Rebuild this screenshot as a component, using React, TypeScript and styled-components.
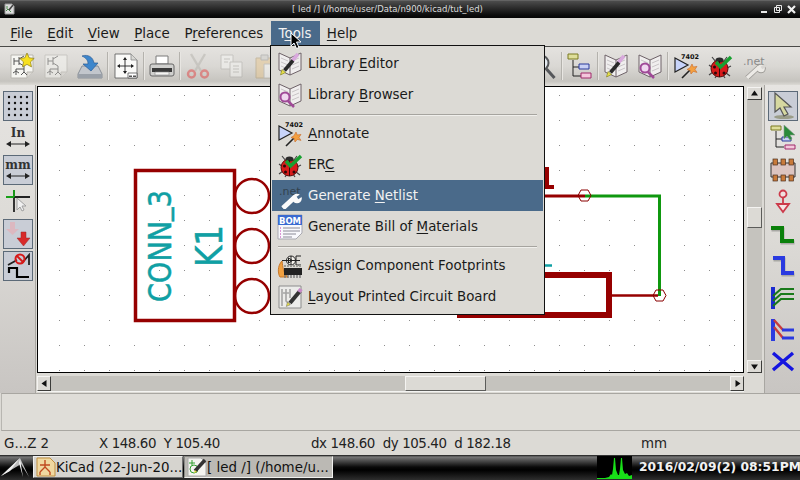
import React from 'react';
import styled, { createGlobalStyle } from 'styled-components';

const GlobalStyle = createGlobalStyle`
  html, body {
    margin: 0;
    padding: 0;
    background: #dcdad5;
  }
  body {
    font-family: 'DejaVu Sans', sans-serif;
    font-size: 13.4px;
    color: #1a1a1a;
  }
  svg {
    flex: none;
  }
`;

const Screen = styled.div`
  position: relative;
  width: 800px;
  height: 480px;
  overflow: hidden;
  display: flex;
  flex-direction: column;
  background: #dcdad5;
`;

/* window title */
const TitleBar = styled.div`
  height: 18px;
  flex: none;
  display: flex;
  align-items: center;
  padding: 0 4px;
  box-sizing: border-box;
  background: linear-gradient(#7a7a7a 0, #4c4c4c 1px, #2c2c2c 8px, #0c0c0c 15px, #050505 100%);
  color: #dcdcdc;
  font-size: 8.5px;
`;

const TitleText = styled.div`
  flex: 1;
  text-align: center;
  white-space: pre;
`;

const WindowButtons = styled.div`
  display: flex;
  width: 36px;
  justify-content: space-between;
`;

/* menu bar */
const MenuBar = styled.div`
  height: 29px;
  flex: none;
  display: flex;
  align-items: stretch;
  box-sizing: border-box;
  padding: 3px 3px 1px 3px;
  border-bottom: 1px solid #4a4a48;
  background: #dcdad5;
`;

const MenuTitle = styled.div<{ $open?: boolean }>`
  display: flex;
  align-items: center;
  padding: 0 ${({ $open }) => ($open ? '8px' : '7.3px')};
  background: ${({ $open }) => ($open ? '#4a6a8a' : 'transparent')};
  color: ${({ $open }) => ($open ? '#f2f2f2' : '#1a1a1a')};
  white-space: pre;
`;

const Key = styled.span`
  text-decoration: underline;
  text-underline-offset: 2px;
  text-decoration-thickness: 1px;
`;

/* top icon toolbar */
const TopToolbar = styled.div`
  height: 38px;
  flex: none;
  display: flex;
  align-items: center;
  box-sizing: border-box;
  padding-left: 5px;
  background: linear-gradient(#e4e2df 0, #dad8d4 50%, #c6c4bf 90%, #dcdad5 100%);
`;

const ToolSlot = styled.div`
  width: 34px;
  height: 30px;
  flex: none;
  display: flex;
  align-items: center;
  justify-content: center;
`;

const ToolSep = styled.div`
  width: 2px;
  height: 28px;
  flex: none;
  background: linear-gradient(90deg, #b4b2ad 50%, #e8e6e2 50%);
`;

const HiddenGap = styled.div`
  width: 244px;
  flex: none;
`;

/* main area */
const Workspace = styled.div`
  height: 308px;
  flex: none;
  display: flex;
  background: #dcdad5;
`;

const SideTools = styled.div<{ $side: 'left' | 'right' }>`
  width: 36px;
  flex: none;
  display: flex;
  flex-direction: column;
  gap: 2px;
  box-sizing: border-box;
  padding: 6px 3px 0 3px;
  background: linear-gradient(#e6e4e1 0, #dcdad6 50%, #c8c5c2 100%);
  border-${({ $side }) => ($side === 'left' ? 'right' : 'left')}: 1px solid #a8a6a1;
`;

const SideButton = styled.div<{ $on?: boolean }>`
  width: 30px;
  height: 30px;
  box-sizing: border-box;
  display: flex;
  align-items: center;
  justify-content: center;
  border: 1px solid ${({ $on }) => ($on ? '#5c6a78' : 'transparent')};
  background: ${({ $on }) => ($on ? '#c9cdd6' : 'transparent')};
`;

const CenterColumn = styled.div`
  width: 707px;
  flex: none;
  margin-left: 1px;
  padding-top: 1px;
  display: flex;
  flex-direction: column;
`;

const CanvasFrame = styled.div`
  height: 287px;
  box-sizing: border-box;
  flex: none;
  border: 1px solid #000;
  background: #fff;
  svg {
    display: block;
  }
`;

const HScroll = styled.div`
  height: 15px;
  margin-top: 3px;
  flex: none;
  display: flex;
  align-items: stretch;
  background: #c5c3be;
  box-shadow: 0 1px 0 #f4f4f2;
`;

const VScroll = styled.div`
  width: 15px;
  flex: none;
  margin: 2px 2px 20px 3px;
  display: flex;
  flex-direction: column;
  background: #c5c3be;
`;

const ScrollButton = styled.div<{ $vertical?: boolean }>`
  flex: none;
  width: ${({ $vertical }) => ($vertical ? '15px' : '14px')};
  height: ${({ $vertical }) => ($vertical ? '13px' : '15px')};
  box-sizing: border-box;
  display: flex;
  align-items: center;
  justify-content: center;
  background: #dcdad5;
  border: 1px solid;
  border-color: #f4f3f1 #3c3c3a #3c3c3a #f4f3f1;
`;

const Thumb = styled.div<{ $vertical?: boolean; $offset: number; $length: number }>`
  flex: none;
  box-sizing: border-box;
  background: #dcdad5;
  border: 1px solid;
  border-color: #f4f3f1 #5c5c5a #5c5c5a #f4f3f1;
  ${({ $vertical, $offset, $length }) =>
    $vertical
      ? `margin-top:${$offset}px;height:${$length}px;width:15px;margin-bottom:auto;`
      : `margin-left:${$offset}px;width:${$length}px;height:15px;margin-right:auto;`}
`;

/* bottom panels */
const MessagePanel = styled.div`
  height: 38px;
  flex: none;
  box-sizing: border-box;
  margin: 0 0 0 1px;
  border-top: 1px solid #a8a6a1;
  border-bottom: 1px solid #a8a6a1;
  border-left: 1px solid #b8b6b1;
  background: #dfddd8;
`;

const StatusBar = styled.div`
  height: 24px;
  flex: none;
  display: grid;
  grid-template-columns: 95px 212px 330px 1fr;
  align-items: center;
  padding-left: 4px;
  white-space: pre;
  color: #222;
`;

const Readout = styled.span`
  letter-spacing: -0.4px;
`;

const Taskbar = styled.div`
  height: 25px;
  flex: none;
  display: flex;
  align-items: flex-start;
  padding-top: 1px;
  box-sizing: border-box;
  background: linear-gradient(#1a1a1a 0, #777 2px, #4a4a4a 6px, #0a0a0a 12px, #000 15px, #2e2e2e 100%);
`;

const StartButton = styled.div`
  width: 33px;
  height: 24px;
  flex: none;
`;

const TaskButton = styled.div<{ $active?: boolean }>`
  width: ${({ $active }) => ($active ? '149px' : '150px')};
  margin-right: 1px;
  height: 22px;
  flex: none;
  box-sizing: border-box;
  display: flex;
  align-items: center;
  gap: 0;
  padding-left: 2px;
  white-space: pre;
  color: #111;
  background: ${({ $active }) => ($active ? '#bbb9b4' : '#d6d4cf')};
  border: 1px solid;
  border-color: ${({ $active }) => ($active ? '#8a8a86 #f0f0ee #f0f0ee #8a8a86' : '#f0f0ee #707070 #707070 #f0f0ee')};
`;

const TrayGraph = styled.div`
  margin-left: auto;
  width: 35px;
  height: 23px;
  flex: none;
  background: #000;
`;

const Clock = styled.div`
  width: 168px;
  flex: none;
  padding-left: 7px;
  box-sizing: border-box;
  height: 23px;
  line-height: 22px;
  color: #f2f2f2;
  font-weight: bold;
  font-size: 12.3px;
  white-space: pre;
`;

/* pull-down Tools menu, lying over the toolbar and canvas */
const PopupMenu = styled.div`
  position: absolute;
  left: 270px;
  top: 45px;
  width: 275px;
  box-sizing: border-box;
  padding: 2px 1px;
  border: 1px solid #111;
  background: #dcdad5;
`;

const PopupItem = styled.div<{ $hover?: boolean }>`
  height: 31px;
  display: flex;
  align-items: center;
  padding-left: 5px;
  gap: 5px;
  background: ${({ $hover }) => ($hover ? '#4a6a8a' : 'transparent')};
  color: ${({ $hover }) => ($hover ? '#f2f2f2' : '#1a1a1a')};
  white-space: pre;
`;

const PopupLabel = styled.span`
  padding-bottom: 1px;
`;

const PopupSep = styled.div`
  height: 8px;
  display: flex;
  align-items: center;
  padding: 0 6px;
  &::after {
    content: '';
    flex: 1;
    height: 1px;
    background: #a6a49f;
    box-shadow: 0 1px 0 #f0efec;
  }
`;

const Pointer = styled.svg`
  position: absolute;
  left: 290px;
  top: 32px;
`;

/* ---------- drawings ---------- */
type IconProps = { size?: number };

const Svg = ({ size = 26, children }: IconProps & { children: React.ReactNode }) => (
  <svg width={size} height={size} viewBox="0 0 26 26">
    {children}
  </svg>
);

const SchematicSheet = ({ faded }: { faded?: boolean }) => (
  <g opacity={faded ? 0.55 : 1}>
    <path d="M2 2h22v17l-6 6H2z" fill="#f6f6f2" stroke="#b8b6b0" />
    <path d="M18 25v-6h6" fill="#dcdad5" stroke="#b8b6b0" />
    <path
      d="M5 5v7M5 8h5M10 4v8M10 6l5-3M10 10l5 3v6M15 16h-8v6M7 18l-3 2M7 18l3 2M15 19l-3 3M15 19l3 3"
      fill="none"
      stroke="#555"
      strokeWidth="1"
    />
  </g>
);

const NewIcon = () => (
  <Svg>
    <SchematicSheet />
    <path d="M18 0l2.200 4.800 5 .6-3.700 3.500 1 5L18 11.400l-4.500 2.500 1-5-3.700-3.500 5-.6z" fill="#f6e020" stroke="#8a7a20" strokeWidth=".7" />
  </Svg>
);

const OpenSheetIcon = () => (
  <Svg>
    <SchematicSheet faded />
  </Svg>
);

const SaveIcon = () => (
  <Svg>
    <path d="M5 13L1 21v4h24v-4l-4-8z" fill="#c2c6cc" stroke="#8a9098" />
    <path d="M1 21h24v4H1z" fill="#9aa0a8" />
    <path d="M5 3c6-2 11 1 12 7h4l-7 8-8-7h5C11 7 9 5 5 3z" fill="#3d86cc" stroke="#2a5c96" strokeWidth=".7" />
  </Svg>
);

const PageIcon = () => (
  <Svg>
    <path d="M2 1h16l6 6v18H2z" fill="#fafaf8" stroke="#555" strokeWidth=".8" />
    <path d="M18 1v6h6" fill="#d8d8d4" stroke="#888" strokeWidth=".8" />
    <path d="M12 5v15M5 13h15" stroke="#222" strokeWidth=".9" />
    <path d="M12 4l-2 3h4zM12 21l-2-3h4zM4 13l3-2v4zM21 13l-3-2v4z" fill="#222" />
    <path d="M15 20h9v5h-9z" fill="#fff" stroke="#555" strokeWidth=".8" />
    <path d="M16 22.500h3v1.500h-3zM20 22.500h3v1.500h-3z" fill="#555" />
  </Svg>
);

const PrintIcon = () => (
  <Svg>
    <path d="M7 3h12v8H7z" fill="#fff" stroke="#7a7a7a" />
    <path d="M3 11h20q2 0 2 2v8q0 2-2 2H3q-2 0-2-2v-8q0-2 2-2z" fill="#d0d0ce" stroke="#666" />
    <path d="M3 15h20v4H3z" fill="#3a3a3a" />
    <path d="M6 19h14v3H6z" fill="#f4f4f2" stroke="#888" strokeWidth=".6" />
  </Svg>
);

const CutIcon = () => (
  <Svg>
    <g opacity=".55">
      <path d="M6 1l10 17M20 1L10 18" stroke="#b8b6b0" strokeWidth="2.400" />
      <circle cx="6.500" cy="21" r="3.500" fill="none" stroke="#e05050" strokeWidth="2.400" />
      <circle cx="19.500" cy="21" r="3.500" fill="none" stroke="#e05050" strokeWidth="2.400" />
    </g>
  </Svg>
);

const CopyIcon = () => (
  <Svg>
    <g opacity=".5" stroke="#b0aeaa" fill="#f8f8f6">
      <path d="M2 2h12v14H2z" />
      <path d="M11 9h12v15H11z" />
      <path d="M5 6h6M5 9h4M14 13h6M14 16h6M14 19h6" fill="none" />
    </g>
  </Svg>
);

const PasteIcon = () => (
  <Svg>
    <g opacity=".5">
      <path d="M3 5h17v20H3z" fill="#e8c890" stroke="#b09a70" />
      <path d="M8 2h7v5H8z" fill="#cfcfcb" stroke="#999" />
      <path d="M11 11h13v14H11z" fill="#fbfbf9" stroke="#b0aeaa" />
    </g>
  </Svg>
);

const ZoomIcon = () => (
  <Svg>
    <circle cx="10" cy="10" r="7.500" fill="#e6ecf2" stroke="#55575a" strokeWidth="2" />
    <path d="M15.500 16l8 9" stroke="#55575a" strokeWidth="3" />
  </Svg>
);

const HierarchyIcon = () => (
  <Svg>
    <path d="M6 7v16h8M6 14h8" fill="none" stroke="#222" />
    <path d="M1 1h10v5H1z" fill="#dede9a" stroke="#7a7a20" />
    <path d="M12 11h10v5H12z" fill="#c8d0f4" stroke="#2a3a9a" />
    <path d="M14 20h10v5H14z" fill="#f4c8dc" stroke="#a02a6a" />
  </Svg>
);

const Book = () => (
  <>
    <path d="M13 7L2 2v17l11 5 11-5V2z" fill="#f0eeee" stroke="#6e6268" />
    <path d="M13 7v17" stroke="#6e6268" />
    <path d="M4 7l7 3M4 11l7 3M4 15l7 3M15 10l7-3M15 14l7-3M15 18l7-3" stroke="#c8c4c6" />
  </>
);

const LibEditIcon = ({ size }: IconProps) => (
  <Svg size={size}>
    <Book />
    <path d="M21 3l-6 7" stroke="#d8a8dc" strokeWidth="3.600" />
    <path d="M16 9.500L7.500 19.500" stroke="#2a2a2a" strokeWidth="3.600" />
    <path d="M5 18.500l3.500 3-5 2.500z" fill="#e8e048" stroke="#7a7a20" strokeWidth=".6" />
  </Svg>
);

const LibBrowseIcon = ({ size }: IconProps) => (
  <Svg size={size}>
    <Book />
    <circle cx="8" cy="15" r="4.500" fill="#f0d8f0" stroke="#a04a98" strokeWidth="2" />
    <path d="M11 19l6 6" stroke="#a04a98" strokeWidth="2.500" />
  </Svg>
);

const AnnotateIcon = ({ size }: IconProps) => (
  <Svg size={size}>
    <path d="M2 5v14l13-7z" fill="#c8d4fa" stroke="#222" strokeWidth="1.200" />
    <text x="8" y="5.500" fontFamily="'DejaVu Sans', sans-serif" fontSize="6.500" fontWeight="bold" fill="#111">
      7402
    </text>
    <path d="M9 25l9-9" stroke="#222" strokeWidth="1.600" />
    <path d="M19 11l1.300 3 3.700-.6-2 3 2 3-3.700-1L18 21l-.8-3.500-3.200-1 3-1.800z" fill="#f4a040" stroke="#c86a2a" strokeWidth=".6" />
  </Svg>
);

const BugIcon = ({ size }: IconProps) => (
  <Svg size={size}>
    <path d="M5 4l4 5M20 4l-3 4M2 12l4 3M24 13l-4 2M2 22l4-3M23 23l-4-3M8 25l2-3M18 25l-2-3" stroke="#444" strokeWidth="1.200" />
    <ellipse cx="12.500" cy="15.500" rx="8.500" ry="8.500" fill="#d81a1a" stroke="#5a0a0a" />
    <ellipse cx="12.500" cy="7" rx="4" ry="2.500" fill="#2a2a2a" />
    <path d="M12.500 8v16" stroke="#3a0808" />
    <circle cx="7.500" cy="14" r="1.500" fill="#2a0808" />
    <circle cx="8.500" cy="20" r="1.500" fill="#2a0808" />
    <circle cx="17" cy="20" r="1.500" fill="#2a0808" />
    <path d="M9 9l4.500 5L24 4" fill="none" stroke="#18a030" strokeWidth="3.400" />
  </Svg>
);

const NetIcon = ({ size, light }: IconProps & { light?: boolean }) => (
  <Svg size={size}>
    <text
      x="2"
      y="11.500"
      fontFamily="'DejaVu Sans', sans-serif"
      fontSize="11"
      fill={light ? '#32424f' : '#8a8a8a'}
    >
      .net
    </text>
    <path d="M6 25l12-11" stroke={light ? '#fafafa' : '#9c9a96'} strokeWidth="5" />
    <circle cx="20" cy="15.500" r="4.800" fill={light ? '#fafafa' : '#9c9a96'} />
    <path d="M6 25l12-11" stroke={light ? '#fafafa' : '#eceae6'} strokeWidth="3.400" />
    <circle cx="20" cy="15.500" r="3.800" fill={light ? '#fafafa' : '#eceae6'} />
    <path d="M20.500 15l5-3.500" stroke={light ? '#4a6a8a' : '#d8d6d2'} strokeWidth="3" />
  </Svg>
);

const BomIcon = ({ size }: IconProps) => (
  <Svg size={size}>
    <path d="M1 1h24v18l-6 6H1z" fill="#f8f8fc" stroke="#a8a8b0" />
    <path d="M1 1h24v10H1z" fill="#3a6ad0" />
    <text x="13" y="9.500" textAnchor="middle" fontFamily="'DejaVu Sans', sans-serif" fontWeight="bold" fontSize="8.500" fill="#fff">
      BOM
    </text>
    <path d="M6 14h17M6 17h17M6 20h13M6 23h9" stroke="#8a8a96" />
    <path d="M3 14h1M3 17h1M3 20h1M3 23h1" stroke="#c030b0" />
  </Svg>
);

const FootprintIcon = ({ size }: IconProps) => (
  <Svg size={size}>
    <path d="M5 8C0 13 1 21 3 24h8C6 20 6 14 5 8z" fill="#f0a040" stroke="#c8782a" />
    <circle cx="14" cy="7.500" r="4.500" fill="#f4f2ec" stroke="#222" />
    <path d="M5 7.500h18M14 3v9M11.500 5v5l4-2.500zM19 3v9h5M19 3h5" fill="none" stroke="#222" />
    <path d="M7 15h18v7H7z" fill="#222" />
    <path d="M8 22v3M11 22v3M14 22v3M17 22v3M20 22v3M23 22v3" stroke="#777" strokeWidth="1.400" />
    <path d="M7 13h18" stroke="#9a9a94" strokeDasharray="2 1" strokeWidth="2" />
  </Svg>
);

const BoardIcon = ({ size }: IconProps) => (
  <Svg size={size}>
    <path d="M2 2h22v22H2z" fill="#ececea" stroke="#8c8c8c" />
    <path d="M5 5v17M9 5v12l4 4M13 5v9M6 9h6" fill="none" stroke="#a4a4a4" strokeWidth="1.600" />
    <path d="M23 7L13 19" stroke="#333" strokeWidth="4" />
    <path d="M24 5l-2 3" stroke="#c88ac8" strokeWidth="4" />
    <path d="M10.500 18l2.800 2.500-4 2z" fill="#e8e048" stroke="#666" strokeWidth=".5" />
  </Svg>
);

const GridIcon = () => (
  <svg width="24" height="24" viewBox="0 0 24 24">
    {[2, 8, 14, 20].flatMap((y) =>
      [2, 8, 14, 20].map((x) => <circle key={`${x}-${y}`} cx={x + 1} cy={y + 1} r="1.200" fill="#111" />),
    )}
  </svg>
);

const UnitIcon = ({ label }: { label: string }) => (
  <svg width="26" height="26" viewBox="0 0 26 26">
    <text x="13" y="12" textAnchor="middle" fontFamily="'DejaVu Serif', serif" fontWeight="bold" fontSize="12" fill="#333">
      {label}
    </text>
    <path d="M3 19h20" stroke="#222" />
    <path d="M1 19l5-3v6zM25 19l-5-3v6z" fill="#222" />
  </svg>
);

const CrossIcon = () => (
  <svg width="26" height="26" viewBox="0 0 26 26">
    <path d="M9 1v22M9 8h16" stroke="#222" strokeWidth="1.800" />
    <path d="M1 8h8M9 1v7" stroke="#18a018" strokeWidth="1.800" />
    <path d="M12 9v12l3-3 2 4 2-1-2-4h4z" fill="#f0f0f0" stroke="#a0a0a0" />
  </svg>
);

const PinsIcon = () => (
  <svg width="26" height="26" viewBox="0 0 26 26">
    <path d="M5 1h5v7h4l-6.500 6L1 8h4z" fill="#dcb8c0" />
    <path d="M16 11h5v6h4l-6.500 8L12 17h4z" fill="#d82a2a" stroke="#9a2a2a" strokeWidth=".5" />
  </svg>
);

const NoDiagIcon = () => (
  <svg width="26" height="26" viewBox="0 0 26 26">
    <path d="M3 12l9-5M17 10l7-8v10" fill="none" stroke="#222" strokeWidth="1.800" />
    <circle cx="15" cy="6" r="4.500" fill="none" stroke="#d81a1a" strokeWidth="2" />
    <path d="M12 3l6 6" stroke="#d81a1a" strokeWidth="2" />
    <path d="M4 20v-5h8v9h12" fill="none" stroke="#000" strokeWidth="2.200" />
  </svg>
);

const SelectIcon = () => (
  <svg width="26" height="28" viewBox="0 0 26 28">
    <ellipse cx="14" cy="25" rx="10" ry="2" fill="#9a9c88" />
    <path d="M5 1v19l5-4 4 8 4-2-4-7h7z" fill="#d6d8a0" stroke="#555" strokeWidth="1.200" />
  </svg>
);

const HierNavIcon = () => (
  <svg width="26" height="26" viewBox="0 0 26 26">
    <path d="M6 6v16h8M6 14h8" fill="none" stroke="#222" />
    <path d="M1 1h10v4H1z" fill="#dede9a" stroke="#7a7a20" />
    <path d="M12 12h9v4h-9z" fill="#c8d0f4" stroke="#2a3a9a" />
    <path d="M15 20h10v4H15z" fill="#f4c8dc" stroke="#a02a6a" />
    <path d="M14 0v14l3-3 3 4 2-1-2-4h5z" fill="#2a8a3a" stroke="#8a9a8a" strokeWidth=".6" />
  </svg>
);

const ChipIcon = () => (
  <svg width="26" height="26" viewBox="0 0 26 26">
    <path d="M1 6h24v14H1z" fill="#dcc4c0" stroke="#333" />
    {[3, 11, 19].map((x) => (
      <g key={x} fill="#c87a3a" stroke="#4a3020" strokeWidth=".7">
        <rect x={x} y="2" width="4.500" height="6" />
        <rect x={x} y="18" width="4.500" height="6" />
      </g>
    ))}
  </svg>
);

const PowerIcon = () => (
  <svg width="26" height="26" viewBox="0 0 26 26">
    <circle cx="13" cy="5" r="3.500" fill="#f0e0e0" stroke="#cc3a4a" strokeWidth="1.800" />
    <path d="M13 9v8" stroke="#cc3a4a" strokeWidth="1.800" />
    <path d="M7 15h12l-6 8z" fill="#f6e4e4" stroke="#cc3a4a" strokeWidth="1.800" />
  </svg>
);

const WireIcon = ({ d, color }: { d: string; color: string }) => (
  <svg width="26" height="26" viewBox="0 0 26 26">
    <path d={d} transform="translate(.5 1.500)" fill="none" stroke="#a8a8a4" strokeWidth="4" />
    <path d={d} fill="none" stroke={color} strokeWidth="4" />
  </svg>
);

const EntriesIcon = ({ bar, wires }: { bar: string; wires: string }) => (
  <svg width="26" height="26" viewBox="0 0 26 26">
    <path d="M3 2v22" stroke={bar} strokeWidth="4" />
    <path d="M3 11L11 4h13M3 16l8-7h13M3 21l8-7h13" fill="none" stroke={wires} strokeWidth="2.200" />
  </svg>
);

const BusEntriesIcon = () => (
  <svg width="26" height="26" viewBox="0 0 26 26">
    <path d="M3 2v22" stroke="#2a3ae0" strokeWidth="4" />
    <path d="M4 3l9 10M4 10l9 11" stroke="#c83a3a" strokeWidth="2.400" />
    <path d="M12 13h12M12 21h12" stroke="#2a3ae0" strokeWidth="3" />
  </svg>
);

const DeleteIcon = () => (
  <svg width="26" height="26" viewBox="0 0 26 26">
    <path d="M3 4l20 17M23 4L3 21" stroke="#1414e0" strokeWidth="3.400" />
  </svg>
);

const Arrow = ({ dir }: { dir: 'up' | 'down' | 'left' | 'right' }) => {
  const rot = { up: 0, right: 90, down: 180, left: 270 }[dir];
  return (
    <svg width="9" height="9" viewBox="0 0 9 9">
      <path d="M4.500 1.500L8 6.500H1z" fill="#111" transform={`rotate(${rot} 4.500 4.500)`} />
    </svg>
  );
};

const Junction = ({ x, y }: { x: number; y: number }) => (
  <path
    d={`M${x - 6.5} ${y}l3-5.500h7l3 5.500-3 5.500h-7z`}
    fill="none"
    stroke="#8a0000"
    strokeWidth="1"
  />
);

const RED = '#960000';
const TEAL = '#10a0a4';
const GREEN = '#0f980f';

const Schematic = () => {
  const dots: React.ReactElement[] = [];
  for (let y = 95; y < 373; y += 25) {
    for (let x = 59; x < 744; x += 25) {
      dots.push(<rect key={`${x}-${y}`} x={x} y={y} width="1" height="1" fill="#8c8c8c" />);
    }
  }
  return (
    <svg width="705" height="285" viewBox="38 87 705 285">
      {dots}
      {/* connector symbol */}
      <rect x="135.500" y="170.500" width="99" height="150" fill="none" stroke={RED} strokeWidth="3.500" />
      {[196, 246, 296].map((cy) => (
        <circle key={cy} cx="252" cy={cy} r="17" fill="none" stroke={RED} strokeWidth="2.500" />
      ))}
      <text
        transform="translate(171 302) rotate(-90)"
        textLength="112"
        lengthAdjust="spacingAndGlyphs"
        fontFamily="'DejaVu Sans', sans-serif"
        fontSize="32"
        fill={TEAL}
        stroke={TEAL}
        strokeWidth=".5"
      >
        CONN
        <tspan dy="-5">_</tspan>
        <tspan dy="5">3</tspan>
      </text>
      <text
        transform="translate(222 267) rotate(-90)"
        textLength="42"
        lengthAdjust="spacingAndGlyphs"
        fontFamily="'DejaVu Sans', sans-serif"
        fontSize="37"
        fill={TEAL}
        stroke={TEAL}
        strokeWidth=".5"
      >
        K1
      </text>
      {/* wires and LED, mostly under the open menu */}
      <path d="M545 167h4v18h5v4h-9z" fill={RED} />
      <path d="M540 265.500h12" stroke={TEAL} strokeWidth="2.500" />
      <path d="M500 196h85" stroke={RED} strokeWidth="2.800" />
      <path d="M585 196h74.500v100" fill="none" stroke={GREEN} strokeWidth="3" />
      <rect x="460" y="275" width="149" height="40" fill="none" stroke={RED} strokeWidth="6" />
      <path d="M612 295.500h46" stroke={RED} strokeWidth="2.500" />
      <Junction x={584.5} y={195.5} />
      <Junction x={659.5} y={295.5} />
    </svg>
  );
};

const Bird = () => (
  <svg width="30" height="24" viewBox="0 0 30 24">
    <path d="M1 20L20 2 29 21 21 8z" fill="#bcbcbc" />
    <path d="M20 2L10 15 1 20z" fill="#f0f0f0" />
    <path d="M20 3l3 18-4-14z" fill="#f4f4f4" />
  </svg>
);

const KicadTaskIcon = () => (
  <svg width="20" height="20" viewBox="0 0 20 20">
    <path d="M1 1h13l5 5v13H1z" fill="#f0d8a0" stroke="#c09040" />
    <path d="M9 3v7M9 10L4 15M9 10l5 5M4 15v3M14 15v3M4 8h10" fill="none" stroke="#c04a20" strokeWidth="1.400" />
  </svg>
);

const LedTaskIcon = () => (
  <svg width="20" height="20" viewBox="0 0 20 20">
    <path d="M1 1h13l5 5v13H1z" fill="#f4f4f0" stroke="#aaa" />
    <circle cx="7" cy="12" r="4" fill="none" stroke="#30a030" />
    <path d="M5 3v5M2 6h6" stroke="#30a030" />
    <path d="M18 3L8 14" stroke="#333" strokeWidth="3.500" />
    <path d="M8 13l2 2-3 1z" fill="#e0d040" />
  </svg>
);

const KiCadSmall = () => (
  <svg width="11" height="12" viewBox="0 0 11 12">
    <path d="M1 1h7l2 2v8H1z" fill="#ddd" stroke="#999" />
    <path d="M3 3v3M2 8l2-2 3 3" fill="none" stroke="#4a8a4a" />
    <path d="M9 2L5 7" stroke="#444" strokeWidth="1.600" />
  </svg>
);

const WinMin = () => (
  <svg width="8" height="10" viewBox="0 0 8 10">
    <path d="M1 8h6" stroke="#e8e8e8" strokeWidth="2" />
  </svg>
);
const WinMax = () => (
  <svg width="10" height="10" viewBox="0 0 10 10">
    <path d="M3.500 1.500h5v5h-5zM1.500 3.500h5v5h-5z" fill="none" stroke="#e8e8e8" />
  </svg>
);
const WinClose = () => (
  <svg width="9" height="10" viewBox="0 0 9 10">
    <path d="M1 2l7 7M8 2L1 9" stroke="#f0f0f0" strokeWidth="2.200" />
  </svg>
);

const menus: [string, string, string][] = [
  ['', 'F', 'ile'],
  ['', 'E', 'dit'],
  ['', 'V', 'iew'],
  ['', 'P', 'lace'],
  ['P', 'r', 'eferences'],
];

const Tool = ({ children }: { children?: React.ReactNode }) => <ToolSlot>{children}</ToolSlot>;

export default function App() {
  return (
    <Screen>
      <GlobalStyle />
      <TitleBar>
        <KiCadSmall />
        <TitleText>{'[ led /] (/home/user/Data/n900/kicad/tut_led)'}</TitleText>
        <WindowButtons>
          <WinMin />
          <WinMax />
          <WinClose />
        </WindowButtons>
      </TitleBar>

      <MenuBar>
        {menus.map(([pre, key, rest]) => (
          <MenuTitle key={key + rest}>
            <span>
              {pre}
              <Key>{key}</Key>
              {rest}
            </span>
          </MenuTitle>
        ))}
        <MenuTitle $open>
          <span>T<Key>o</Key>ols</span>
        </MenuTitle>
        <MenuTitle>
          <span><Key>H</Key>elp</span>
        </MenuTitle>
      </MenuBar>

      <TopToolbar>
        <Tool><NewIcon /></Tool>
        <Tool><OpenSheetIcon /></Tool>
        <Tool><SaveIcon /></Tool>
        <ToolSep />
        <Tool><PageIcon /></Tool>
        <ToolSep />
        <Tool><PrintIcon /></Tool>
        <ToolSep />
        <Tool><CutIcon /></Tool>
        <Tool><CopyIcon /></Tool>
        <Tool><PasteIcon /></Tool>
        <HiddenGap />
        <Tool><ZoomIcon /></Tool>
        <ToolSep />
        <Tool><HierarchyIcon /></Tool>
        <ToolSep />
        <Tool><LibEditIcon /></Tool>
        <Tool><LibBrowseIcon /></Tool>
        <ToolSep />
        <Tool><AnnotateIcon /></Tool>
        <Tool><BugIcon /></Tool>
        <Tool><NetIcon /></Tool>
      </TopToolbar>

      <Workspace>
        <SideTools $side="left">
          <SideButton $on><GridIcon /></SideButton>
          <SideButton><UnitIcon label="In" /></SideButton>
          <SideButton $on><UnitIcon label="mm" /></SideButton>
          <SideButton><CrossIcon /></SideButton>
          <SideButton $on><PinsIcon /></SideButton>
          <SideButton $on><NoDiagIcon /></SideButton>
        </SideTools>

        <CenterColumn>
          <CanvasFrame>
            <Schematic />
          </CanvasFrame>
          <HScroll>
            <ScrollButton><Arrow dir="left" /></ScrollButton>
            <Thumb $offset={354} $length={81} />
            <ScrollButton><Arrow dir="right" /></ScrollButton>
          </HScroll>
        </CenterColumn>

        <VScroll>
          <ScrollButton $vertical><Arrow dir="up" /></ScrollButton>
          <Thumb $vertical $offset={107} $length={21} />
          <ScrollButton $vertical><Arrow dir="down" /></ScrollButton>
        </VScroll>

        <SideTools $side="right">
          <SideButton $on><SelectIcon /></SideButton>
          <SideButton><HierNavIcon /></SideButton>
          <SideButton><ChipIcon /></SideButton>
          <SideButton><PowerIcon /></SideButton>
          <SideButton><WireIcon d="M1 7h11v13h12" color="#0a800a" /></SideButton>
          <SideButton><WireIcon d="M3 5h10v15h11" color="#2a3ae0" /></SideButton>
          <SideButton><EntriesIcon bar="#1a2ad0" wires="#1a7a1a" /></SideButton>
          <SideButton><BusEntriesIcon /></SideButton>
          <SideButton><DeleteIcon /></SideButton>
        </SideTools>
      </Workspace>

      <MessagePanel />

      <StatusBar>
        <span>G...Z 2</span>
        <Readout>{'X 148.60  Y 105.40'}</Readout>
        <Readout>{'dx 148.60  dy 105.40  d 182.18'}</Readout>
        <span>mm</span>
      </StatusBar>

      <Taskbar>
        <StartButton><Bird /></StartButton>
        <TaskButton><KicadTaskIcon />{'KiCad (22-Jun-20...'}</TaskButton>
        <TaskButton $active><LedTaskIcon />{'[ led /] (/home/u...'}</TaskButton>
        <TrayGraph>
          <svg width="35" height="23" viewBox="0 0 35 23">
            <path
              d="M0 23v-1l8 0 4-1 2-3 1 1 1-6 1-11 1 0 1 12 2 5 1 0 1-6 1-11 1 0 1 12 2 4 2-1 2 3 3-1 v4z"
              fill="#18e018"
            />
          </svg>
        </TrayGraph>
        <Clock>2016/02/09(2) 08:51PM</Clock>
      </Taskbar>

      <PopupMenu>
        <PopupItem><LibEditIcon /><PopupLabel>Library <Key>E</Key>ditor</PopupLabel></PopupItem>
        <PopupItem><LibBrowseIcon /><PopupLabel>Library <Key>B</Key>rowser</PopupLabel></PopupItem>
        <PopupSep />
        <PopupItem><AnnotateIcon /><PopupLabel><Key>A</Key>nnotate</PopupLabel></PopupItem>
        <PopupItem><BugIcon /><PopupLabel>ER<Key>C</Key></PopupLabel></PopupItem>
        <PopupItem $hover><NetIcon light /><PopupLabel>Generate <Key>N</Key>etlist</PopupLabel></PopupItem>
        <PopupItem><BomIcon /><PopupLabel>Generate Bill of <Key>M</Key>aterials</PopupLabel></PopupItem>
        <PopupSep />
        <PopupItem><FootprintIcon /><PopupLabel>A<Key>s</Key>sign Component Footprints</PopupLabel></PopupItem>
        <PopupItem><BoardIcon /><PopupLabel><Key>L</Key>ayout Printed Circuit Board</PopupLabel></PopupItem>
      </PopupMenu>

      <Pointer width="13" height="18" viewBox="0 0 13 18">
        <path d="M1 1v13l3-3 2.500 5.500 2.500-1-2.500-5.500H11z" fill="#000" stroke="#fff" />
      </Pointer>
    </Screen>
  );
}
